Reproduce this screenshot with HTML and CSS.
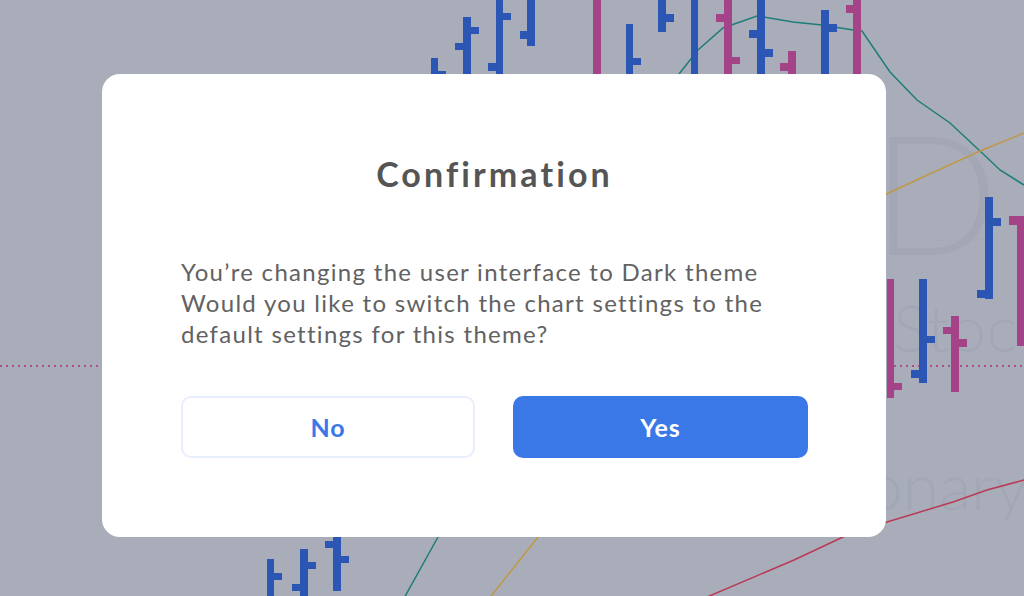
FILE: index.html
```html
<!DOCTYPE html>
<html lang="en">
<head>
  <meta charset="UTF-8">
  <title>Confirmation</title>
  <meta name="viewport" content="width=device-width, initial-scale=1.0">
  <link rel="stylesheet" href="styles.css">
</head>
<body>

  <!--chart behind the dialog-->
  <svg class="chart" width="1024" height="596" viewBox="0 0 1024 596">
    <rect class="chart-bg" x="0" y="0" width="1024" height="596"/>
    <line class="grid" x1="0" y1="240" x2="1024" y2="240"/>
    <line class="grid" x1="0" y1="440" x2="1024" y2="440"/>

    <!--watermark-->
    <text class="mark mark-big" x="872" y="255">D</text>
    <text class="mark mark-mid" x="893" y="352">Stoc</text>
    <text class="mark mark-mid" x="866" y="510">onary</text>

    <!--moving averages-->
    <polyline class="ma ma-teal" points="679,74 698,50 723,28 757,16 793,22 822,25 853,30 862,31 890,72 917,100 950,123 980,151 1000,170 1024,185"/>
    <polyline class="ma ma-teal" points="470,470 438,537 403,600"/>
    <polyline class="ma ma-gold" points="880,197 923,177 980,151 1024,133"/>
    <polyline class="ma ma-gold" points="570,480 538,537 488,600"/>
    <polyline class="ma ma-red" points="700,600 794,560 843,537 887,522 953,502 987,490 1024,480"/>

    <line class="price-line" x1="0" y1="366" x2="1024" y2="366"/>

    <!--bars, up-->
    <g class="up">
      <rect x="431" y="58" width="7" height="20"/><rect x="438" y="71" width="8" height="6"/>
      <rect x="463" y="17" width="8" height="60"/><rect x="455" y="43" width="8" height="7"/><rect x="471" y="27" width="8" height="7"/>
      <rect x="496" y="0" width="7" height="78"/><rect x="488" y="63" width="8" height="8"/><rect x="503" y="13" width="8" height="7"/>
      <rect x="527" y="0" width="8" height="46"/><rect x="520" y="31" width="7" height="8"/>
      <rect x="626" y="24" width="7" height="54"/><rect x="633" y="58" width="8" height="7"/>
      <rect x="658" y="0" width="8" height="32"/><rect x="666" y="14" width="8" height="8"/>
      <rect x="691" y="0" width="7" height="78"/>
      <rect x="757" y="0" width="8" height="78"/><rect x="749" y="30" width="8" height="8"/><rect x="765" y="49" width="8" height="8"/>
      <rect x="821" y="10" width="8" height="68"/><rect x="829" y="24" width="8" height="8"/>
      <rect x="919" y="279" width="8" height="104"/><rect x="927" y="336" width="8" height="7"/><rect x="911" y="370" width="8" height="8"/>
      <rect x="985" y="197" width="8" height="102"/><rect x="993" y="218" width="8" height="8"/><rect x="977" y="290" width="8" height="8"/>
      <rect x="267" y="559" width="7" height="40"/><rect x="274" y="573" width="8" height="7"/>
      <rect x="300" y="549" width="8" height="50"/><rect x="292" y="584" width="8" height="7"/><rect x="308" y="562" width="8" height="7"/>
      <rect x="333" y="530" width="8" height="61"/><rect x="325" y="541" width="8" height="7"/><rect x="341" y="556" width="8" height="7"/>
    </g>
    <!--bars, down-->
    <g class="down">
      <rect x="593" y="0" width="8" height="78"/>
      <rect x="724" y="0" width="8" height="78"/><rect x="716" y="14" width="8" height="8"/><rect x="732" y="57" width="8" height="7"/>
      <rect x="788" y="51" width="8" height="27"/><rect x="780" y="63" width="8" height="8"/>
      <rect x="853" y="0" width="8" height="78"/><rect x="846" y="5" width="8" height="8"/>
      <rect x="887" y="279" width="7" height="119"/><rect x="894" y="383" width="8" height="7"/>
      <rect x="951" y="316" width="8" height="76"/><rect x="943" y="327" width="8" height="7"/><rect x="959" y="339" width="8" height="8"/>
      <rect x="1017" y="216" width="8" height="130"/><rect x="1009" y="216" width="8" height="9"/>
    </g>
  </svg>

  <div class="modal">
    <h2 class="modal-title">Confirmation</h2>
    <p class="modal-text">
      You’re changing the user interface to Dark theme<br>
      Would you like to switch the chart settings to the<br>
      default settings for this theme?
    </p>
    <div class="modal-buttons">
      <button class="btn btn-no">No</button>
      <button class="btn btn-yes">Yes</button>
    </div>
  </div>

</body>
</html>
```

FILE: styles.css
```css
html, body {
  margin: 0;
  padding: 0;
  width: 100%;
  height: 100%;
  overflow: hidden;
}
body {
  background: #a9adba;
  font-family: "Lato", "Noto Sans", sans-serif;
  position: relative;
}

/*chart canvas*/
.chart {
  display: block;
  position: absolute;
  left: 0;
  top: 0;
}
.chart-bg {
  fill: #a9adba;
}
.grid {
  stroke: #a5a9b7;
  stroke-width: 1;
}
.mark {
  fill: #a3a7b5;
  font-family: "Lato", sans-serif;
  font-weight: 300;
}
.mark-big {
  font-size: 166px;
}
.mark-mid {
  font-size: 66px;
}
.ma {
  fill: none;
  stroke-width: 1.5;
}
.ma-teal { stroke: #1f7d78; }
.ma-gold { stroke: #bf9848; }
.ma-red { stroke: #b93a55; }
.price-line {
  stroke: #ae4c8e;
  stroke-width: 2;
  stroke-dasharray: 2 4;
}
.up rect { fill: #2c56b3; }
.down rect { fill: #a54388; }

/*dialog*/
.modal {
  position: absolute;
  left: 102px;
  top: 74px;
  width: 784px;
  box-sizing: border-box;
  padding: 80px 78px 79px 79px;
  background: #fff;
  border-radius: 18px;
}
.modal-title {
  margin: 0;
  font-size: 34px;
  line-height: 40px;
  font-weight: 700;
  color: #555;
  text-align: center;
  letter-spacing: 3.1px;
}
.modal-text {
  margin: 62px 0 47px 0;
  font-size: 24px;
  line-height: 31px;
  color: #626262;
  letter-spacing: 1.3px;
}
.modal-buttons {
  display: flex;
  justify-content: space-between;
}
.btn {
  flex: none;
  box-sizing: border-box;
  width: 294px;
  height: 62px;
  padding: 0;
  border-radius: 10px;
  font-family: "Lato", "Noto Sans", sans-serif;
  font-size: 25px;
  font-weight: 700;
  letter-spacing: 1px;
  cursor: pointer;
}
.btn-no {
  background: #fff;
  color: #3b78e7;
  border: 2px solid #e8eefb;
}
.btn-yes {
  width: 295px;
  background: #3b78e7;
  color: #fff;
  border: none;
}
```
